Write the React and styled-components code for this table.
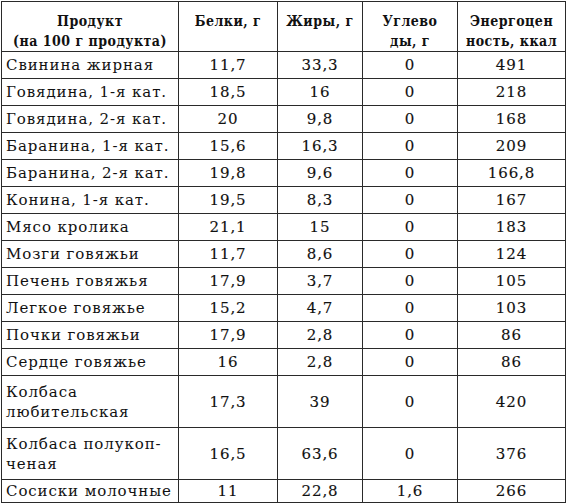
import React from 'react'
import styled, { createGlobalStyle } from 'styled-components';

const Global = createGlobalStyle`
  body {
    margin: 0;
    background: #ffffff;
  }
`;

const Page = styled.div`
  padding: 1px 0 0 1px;
`;

const Table = styled.table`
  border-collapse: collapse;
  font-family: "DejaVu Serif", serif;
  font-size: 15px;
  color: #111111;
  letter-spacing: 0.9px;
  table-layout: fixed;
`;

const HeadCell = styled.th`
  border: 1.5px solid #2a2a2a;
  height: 50px;
  padding: 9px 2px 0;
  box-sizing: border-box;
  vertical-align: top;
  text-align: center;
  font-family: "DejaVu Serif Condensed", "DejaVu Serif", serif;
  font-size: 14px;
  font-weight: bold;
  letter-spacing: 0.5px;
  white-space: nowrap;
  line-height: 20px;
  width: ${p => p.w}px;
`;

const Row = styled.tr`
  height: ${p => p.h}px;
`;

const NameCell = styled.td`
  border: 1.5px solid #2a2a2a;
  padding: 0 4px;
  text-align: left;
  white-space: nowrap;
  line-height: 20px;
`;

const NumCell = styled.td`
  border: 1.5px solid #2a2a2a;
  padding: 0;
  text-align: center;
  line-height: 20px;
  -webkit-text-stroke: 0.15px #111111;
`;

const rows = [
  ['Свинина жирная', '11,7', '33,3', '0', '491'],
  ['Говядина, 1-я кат.', '18,5', '16', '0', '218'],
  ['Говядина, 2-я кат.', '20', '9,8', '0', '168'],
  ['Баранина, 1-я кат.', '15,6', '16,3', '0', '209'],
  ['Баранина, 2-я кат.', '19,8', '9,6', '0', '166,8'],
  ['Конина, 1-я кат.', '19,5', '8,3', '0', '167'],
  ['Мясо кролика', '21,1', '15', '0', '183'],
  ['Мозги говяжьи', '11,7', '8,6', '0', '124'],
  ['Печень говяжья', '17,9', '3,7', '0', '105'],
  ['Легкое говяжье', '15,2', '4,7', '0', '103'],
  ['Почки говяжьи', '17,9', '2,8', '0', '86'],
  ['Сердце говяжье', '16', '2,8', '0', '86'],
  [['Колбаса', 'любительская'], '17,3', '39', '0', '420'],
  [['Колбаса полукоп-', 'ченая'], '16,5', '63,6', '0', '376'],
  ['Сосиски молочные', '11', '22,8', '1,6', '266'],
];

export default function App() {
  return (
    <Page>
      <Global />
      <Table>
        <thead>
          <tr>
            <HeadCell w={177}>Продукт<br />(на 100 г продукта)</HeadCell>
            <HeadCell w={99}>Белки, г</HeadCell>
            <HeadCell w={85}>Жиры, г</HeadCell>
            <HeadCell w={95}>Углево<br />ды, г</HeadCell>
            <HeadCell w={108}>Энергоцен<br />ность, ккал</HeadCell>
          </tr>
        </thead>
        <tbody>
          {rows.map(([name, ...nums], i) => {
            const tall = Array.isArray(name);
            const h = tall ? 52 : i === rows.length - 1 ? 23 : 27;
            return (
              <Row key={i} h={h}>
                <NameCell>{tall ? <>{name[0]}<br />{name[1]}</> : name}</NameCell>
                {nums.map((n, j) => <NumCell key={j}>{n}</NumCell>)}
              </Row>
            );
          })}
        </tbody>
      </Table>
    </Page>
  );
}
